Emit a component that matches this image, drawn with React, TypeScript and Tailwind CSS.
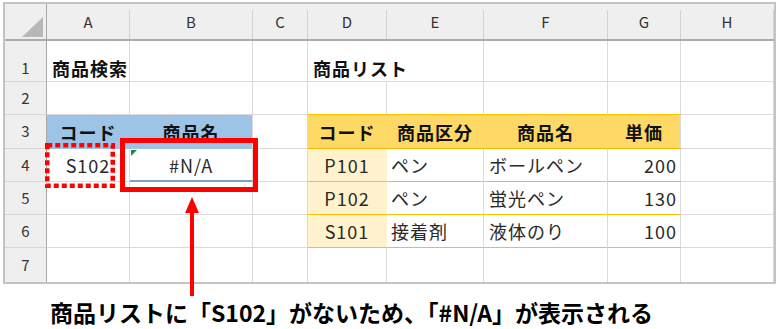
import React from 'react';

type Align = 'l' | 'c' | 'r';

interface CellProps {
  children?: React.ReactNode;
  align?: Align;
  className?: string;
}

// one worksheet cell, gridlines on right and bottom
const Cell: React.FC<CellProps> = ({ children, align = 'l', className = '' }) => {
  const pos =
    align === 'c' ? 'justify-center' : align === 'r' ? 'justify-end pr-[3px]' : 'justify-start pl-[4px]';
  return (
    <div
      className={`flex items-center whitespace-nowrap border-r border-b border-[#dadada] text-[18px] leading-[22px] tracking-[1px] text-[#2a2a2a] ${pos} ${className}`}
    >
      {children}
    </div>
  );
};

const RowNum: React.FC<{ n: number; className?: string }> = ({ n, className = '' }) => (
  <div
    className={`flex items-center justify-center bg-[#efefef] border-r border-b border-r-[#a9a9a9] border-b-[#d6d6d6] text-[15px] text-[#333] ${className}`}
  >
    {n}
  </div>
);

const letters = ['A', 'B', 'C', 'D', 'E', 'F', 'G', 'H'];

const blue = 'bg-[#9dc3e6] border-r-[#9dc3e6] border-b-[#9dc3e6] font-bold text-[#111]';
const yellowHead = 'bg-[#ffd966] border-r-[#ffd966] border-b-[#f2b600] font-bold text-[#111]';
const gold = 'border-b-[#ffc000]';
const code = 'bg-[#fff2cc] border-r-[#fff2cc] border-b-[#ffc000]';

const products = [
  { code: 'P101', kind: 'ペン', name: 'ボールペン', price: 200 },
  { code: 'P102', kind: 'ペン', name: '蛍光ペン', price: 130 },
  { code: 'S101', kind: '接着剤', name: '液体のり', price: 100 },
];

export default function App() {
  return (
    <div className="relative w-[781px] h-[329px] overflow-hidden bg-white font-['Noto_Sans_CJK_JP','Noto_Sans',sans-serif]">
      <div className="ml-[3px] mt-[2px] w-[773px] border-2 border-[#c3c3c3]">
        <div className="grid grid-cols-[42px_83px_123px_55px_79px_97px_124px_73px_93px] grid-rows-[37px_41px_33px_34px_33px_33px_33px_34px]">
          {/* column headers */}
          <div className="flex items-end justify-end pr-[3px] pb-[2px] bg-[#efefef] border-r border-b-2 border-r-[#a9a9a9] border-b-[#ababab]">
            <svg width="21" height="20" viewBox="0 0 21 20">
              <polygon points="21,0 21,20 0,20" fill="#b7b7b7" />
            </svg>
          </div>
          {letters.map((l) => (
            <div key={l} className="bg-[#efefef] border-b-2 border-[#ababab] pt-[6px]">
              <div className="h-full flex items-center justify-center pb-[5px] border-r border-[#d2d2d2] text-[15px] text-[#333]">
                {l}
              </div>
            </div>
          ))}

          {/* row 1 */}
          <RowNum n={1} className="pt-[14px]" />
          <Cell className="pt-[14px] pl-[5px] font-bold text-[#111]">商品検索</Cell>
          <Cell />
          <Cell />
          <Cell className="pt-[14px] pl-[5px] font-bold text-[#111] border-r-white">商品リスト</Cell>
          <Cell />
          <Cell />
          <Cell />
          <Cell />

          {/* row 2 */}
          <RowNum n={2} />
          <Cell />
          <Cell />
          <Cell />
          <Cell className={gold} />
          <Cell className={gold} />
          <Cell className={gold} />
          <Cell className={gold} />
          <Cell />

          {/* row 3 */}
          <RowNum n={3} />
          <Cell align="c" className={blue}>コード</Cell>
          <Cell align="c" className="bg-[#9dc3e6] border-b-[#9dc3e6] font-bold text-[#111]">商品名</Cell>
          <Cell />
          <Cell align="c" className={yellowHead}>コード</Cell>
          <Cell align="c" className={yellowHead}>商品区分</Cell>
          <Cell align="c" className={yellowHead}>商品名</Cell>
          <Cell align="c" className="bg-[#ffd966] border-b-[#f2b600] font-bold text-[#111]">単価</Cell>
          <Cell />

          {/* rows 4 - 6 */}
          {products.map((p, i) => (
            <React.Fragment key={p.code}>
              <RowNum n={i + 4} />
              {i === 0 ? (
                <>
                  <Cell align="c">S102</Cell>
                  <Cell align="c" className="border-b-2 border-b-[#7d9fcc]">#N/A</Cell>
                </>
              ) : (
                <>
                  <Cell />
                  <Cell />
                </>
              )}
              <Cell />
              <Cell align="c" className={code}>{p.code}</Cell>
              <Cell className={gold}>{p.kind}</Cell>
              <Cell className={`${gold} pl-[5px]`}>{p.name}</Cell>
              <Cell align="r" className={gold}>{p.price}</Cell>
              <Cell />
            </React.Fragment>
          ))}

          {/* row 7 */}
          <RowNum n={7} className="border-b-0" />
          {letters.map((l) => (
            <Cell key={l} className="border-b-0" />
          ))}
        </div>
      </div>

      <div className="mt-[16px] pl-[50px] text-[23px] leading-[24px] font-bold text-black whitespace-nowrap">
        商品リストに「S102」がないため、「#N/A」が表示される
      </div>

      {/* callout marks drawn over the sheet */}
      <svg className="absolute inset-0 pointer-events-none" width="781" height="329" viewBox="0 0 781 329">
        <polygon points="131,150 137,150 131,156" fill="#1f8a3b" />
        <rect x="47.25" y="145.25" width="65.5" height="40.5" fill="none" stroke="#f00" strokeWidth="4.5" strokeDasharray="5 3" />
        <rect x="122.5" y="140.5" width="133" height="49" fill="none" stroke="#f00" strokeWidth="5" />
        <rect x="190" y="210" width="4" height="86" fill="#f00" />
        <polygon points="192,197 185,213 199,213" fill="#f00" />
      </svg>
    </div>
  );
}
